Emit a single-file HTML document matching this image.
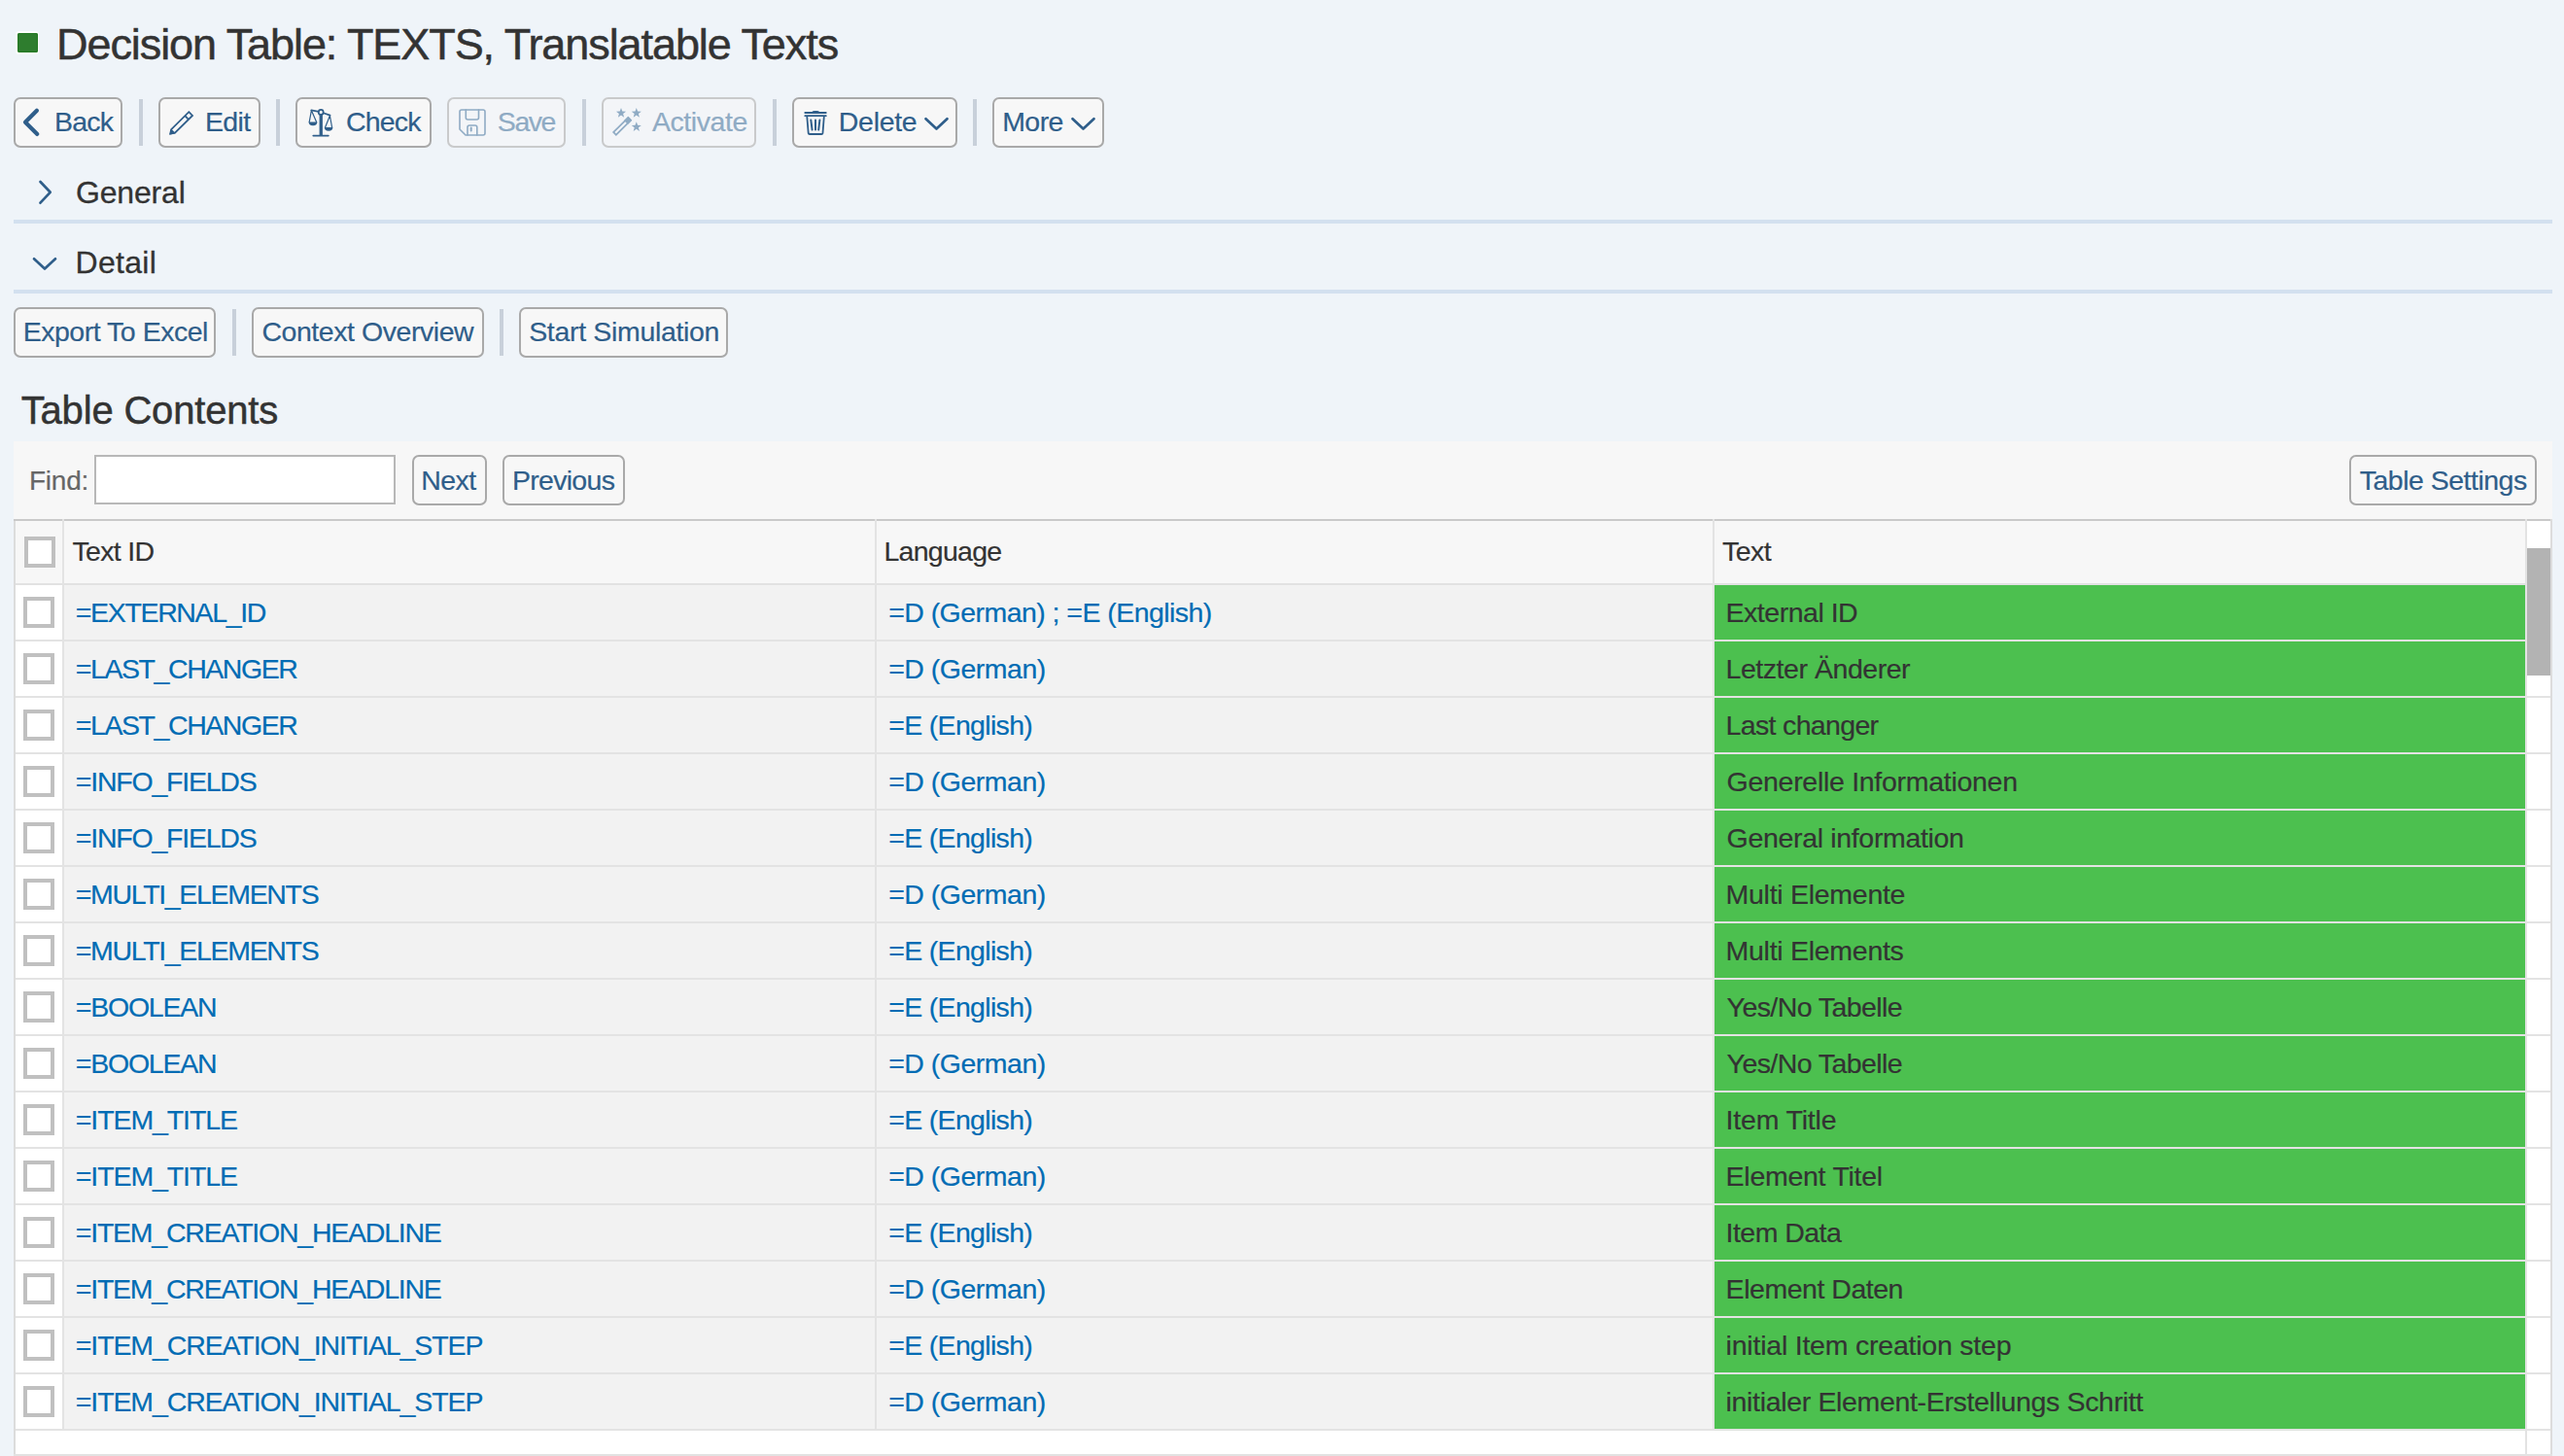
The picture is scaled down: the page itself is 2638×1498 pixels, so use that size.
<!DOCTYPE html>
<html><head><meta charset="utf-8"><title>Decision Table: TEXTS, Translatable Texts</title>
<style>
html,body{margin:0;padding:0}
body{width:2638px;height:1498px;overflow:hidden;background:#eff4f9;position:relative;font-family:"Liberation Sans",sans-serif}
.t{position:absolute;white-space:pre}
.btn{position:absolute;box-sizing:border-box;border:2px solid #a9a9a9;border-radius:7px;background:#f7f7f7}
.btn.dis{border-color:#c9cacb;background:#f3f5f8}
.sep{position:absolute;width:4px;height:48px;background:#c8d0da}
.cb{position:absolute;box-sizing:border-box;width:32px;height:32px;border:4px solid #c0c0c0;background:#fff}
</style></head><body>
<div style='position:absolute;left:16px;top:32px;width:24px;height:24px;background:#fff;border-radius:4px'></div><div style='position:absolute;left:17.5px;top:34px;width:21px;height:20px;background:#2e7d2e;border-radius:2px;box-shadow:inset 0 0 0 1px #237823'></div><div class=btn style='left:14px;top:100px;width:112px;height:52px'></div><div class=btn style='left:163px;top:100px;width:105px;height:52px'></div><div class=btn style='left:304px;top:100px;width:140px;height:52px'></div><div class='btn dis' style='left:460px;top:100px;width:122px;height:52px'></div><div class='btn dis' style='left:619px;top:100px;width:159px;height:52px'></div><div class=btn style='left:815px;top:100px;width:170px;height:52px'></div><div class=btn style='left:1021px;top:100px;width:115px;height:52px'></div><div class=sep style='left:143px;top:102px'></div><div class=sep style='left:284px;top:102px'></div><div class=sep style='left:599px;top:102px'></div><div class=sep style='left:795px;top:102px'></div><div class=sep style='left:1001px;top:102px'></div><div style='position:absolute;left:14px;top:226px;width:2612px;height:4px;background:#d3e0ef'></div><div style='position:absolute;left:14px;top:298px;width:2612px;height:4px;background:#d3e0ef'></div><div class=btn style='left:14px;top:316px;width:208px;height:52px'></div><div class=btn style='left:259px;top:316px;width:239px;height:52px'></div><div class=btn style='left:534px;top:316px;width:215px;height:52px'></div><div class=sep style='left:239px;top:318px'></div><div class=sep style='left:514px;top:318px'></div><div style='position:absolute;left:14px;top:454px;width:2612px;height:1044px;background:#f7f7f7'></div><div style='position:absolute;left:97px;top:468px;width:310px;height:51px;box-sizing:border-box;border:2px solid #b8b8b8;background:#fff'></div><div class=btn style='left:424px;top:468px;width:77px;height:52px'></div><div class=btn style='left:517px;top:468px;width:126px;height:52px'></div><div class=btn style='left:2417px;top:468px;width:193px;height:52px'></div><div style='position:absolute;left:14px;top:534px;width:2612px;height:2px;background:#c9c9c9'></div><div style='position:absolute;left:14px;top:536px;width:2px;height:962px;background:#dcdcdc'></div><div style='position:absolute;left:2624px;top:534px;width:2px;height:964px;background:#dcdcdc'></div><div style='position:absolute;left:16px;top:536px;width:2582px;height:64px;background:#f7f7f7'></div><div style='position:absolute;left:2600px;top:536px;width:24px;height:936px;background:#fff'></div><div style='position:absolute;left:16px;top:600px;width:2582px;height:2px;background:#e2e2e2'></div><div style='position:absolute;left:16px;top:602px;width:48px;height:56px;background:#fff'></div><div style='position:absolute;left:66px;top:602px;width:1696px;height:56px;background:#f2f2f2'></div><div style='position:absolute;left:1764px;top:602px;width:834px;height:56px;background:#4cc04f'></div><div style='position:absolute;left:16px;top:658px;width:2608px;height:2px;background:#e3e3e3'></div><div class=cb style='left:24px;top:614px'></div><div style='position:absolute;left:16px;top:660px;width:48px;height:56px;background:#fff'></div><div style='position:absolute;left:66px;top:660px;width:1696px;height:56px;background:#f2f2f2'></div><div style='position:absolute;left:1764px;top:660px;width:834px;height:56px;background:#4cc04f'></div><div style='position:absolute;left:16px;top:716px;width:2608px;height:2px;background:#e3e3e3'></div><div class=cb style='left:24px;top:672px'></div><div style='position:absolute;left:16px;top:718px;width:48px;height:56px;background:#fff'></div><div style='position:absolute;left:66px;top:718px;width:1696px;height:56px;background:#f2f2f2'></div><div style='position:absolute;left:1764px;top:718px;width:834px;height:56px;background:#4cc04f'></div><div style='position:absolute;left:16px;top:774px;width:2608px;height:2px;background:#e3e3e3'></div><div class=cb style='left:24px;top:730px'></div><div style='position:absolute;left:16px;top:776px;width:48px;height:56px;background:#fff'></div><div style='position:absolute;left:66px;top:776px;width:1696px;height:56px;background:#f2f2f2'></div><div style='position:absolute;left:1764px;top:776px;width:834px;height:56px;background:#4cc04f'></div><div style='position:absolute;left:16px;top:832px;width:2608px;height:2px;background:#e3e3e3'></div><div class=cb style='left:24px;top:788px'></div><div style='position:absolute;left:16px;top:834px;width:48px;height:56px;background:#fff'></div><div style='position:absolute;left:66px;top:834px;width:1696px;height:56px;background:#f2f2f2'></div><div style='position:absolute;left:1764px;top:834px;width:834px;height:56px;background:#4cc04f'></div><div style='position:absolute;left:16px;top:890px;width:2608px;height:2px;background:#e3e3e3'></div><div class=cb style='left:24px;top:846px'></div><div style='position:absolute;left:16px;top:892px;width:48px;height:56px;background:#fff'></div><div style='position:absolute;left:66px;top:892px;width:1696px;height:56px;background:#f2f2f2'></div><div style='position:absolute;left:1764px;top:892px;width:834px;height:56px;background:#4cc04f'></div><div style='position:absolute;left:16px;top:948px;width:2608px;height:2px;background:#e3e3e3'></div><div class=cb style='left:24px;top:904px'></div><div style='position:absolute;left:16px;top:950px;width:48px;height:56px;background:#fff'></div><div style='position:absolute;left:66px;top:950px;width:1696px;height:56px;background:#f2f2f2'></div><div style='position:absolute;left:1764px;top:950px;width:834px;height:56px;background:#4cc04f'></div><div style='position:absolute;left:16px;top:1006px;width:2608px;height:2px;background:#e3e3e3'></div><div class=cb style='left:24px;top:962px'></div><div style='position:absolute;left:16px;top:1008px;width:48px;height:56px;background:#fff'></div><div style='position:absolute;left:66px;top:1008px;width:1696px;height:56px;background:#f2f2f2'></div><div style='position:absolute;left:1764px;top:1008px;width:834px;height:56px;background:#4cc04f'></div><div style='position:absolute;left:16px;top:1064px;width:2608px;height:2px;background:#e3e3e3'></div><div class=cb style='left:24px;top:1020px'></div><div style='position:absolute;left:16px;top:1066px;width:48px;height:56px;background:#fff'></div><div style='position:absolute;left:66px;top:1066px;width:1696px;height:56px;background:#f2f2f2'></div><div style='position:absolute;left:1764px;top:1066px;width:834px;height:56px;background:#4cc04f'></div><div style='position:absolute;left:16px;top:1122px;width:2608px;height:2px;background:#e3e3e3'></div><div class=cb style='left:24px;top:1078px'></div><div style='position:absolute;left:16px;top:1124px;width:48px;height:56px;background:#fff'></div><div style='position:absolute;left:66px;top:1124px;width:1696px;height:56px;background:#f2f2f2'></div><div style='position:absolute;left:1764px;top:1124px;width:834px;height:56px;background:#4cc04f'></div><div style='position:absolute;left:16px;top:1180px;width:2608px;height:2px;background:#e3e3e3'></div><div class=cb style='left:24px;top:1136px'></div><div style='position:absolute;left:16px;top:1182px;width:48px;height:56px;background:#fff'></div><div style='position:absolute;left:66px;top:1182px;width:1696px;height:56px;background:#f2f2f2'></div><div style='position:absolute;left:1764px;top:1182px;width:834px;height:56px;background:#4cc04f'></div><div style='position:absolute;left:16px;top:1238px;width:2608px;height:2px;background:#e3e3e3'></div><div class=cb style='left:24px;top:1194px'></div><div style='position:absolute;left:16px;top:1240px;width:48px;height:56px;background:#fff'></div><div style='position:absolute;left:66px;top:1240px;width:1696px;height:56px;background:#f2f2f2'></div><div style='position:absolute;left:1764px;top:1240px;width:834px;height:56px;background:#4cc04f'></div><div style='position:absolute;left:16px;top:1296px;width:2608px;height:2px;background:#e3e3e3'></div><div class=cb style='left:24px;top:1252px'></div><div style='position:absolute;left:16px;top:1298px;width:48px;height:56px;background:#fff'></div><div style='position:absolute;left:66px;top:1298px;width:1696px;height:56px;background:#f2f2f2'></div><div style='position:absolute;left:1764px;top:1298px;width:834px;height:56px;background:#4cc04f'></div><div style='position:absolute;left:16px;top:1354px;width:2608px;height:2px;background:#e3e3e3'></div><div class=cb style='left:24px;top:1310px'></div><div style='position:absolute;left:16px;top:1356px;width:48px;height:56px;background:#fff'></div><div style='position:absolute;left:66px;top:1356px;width:1696px;height:56px;background:#f2f2f2'></div><div style='position:absolute;left:1764px;top:1356px;width:834px;height:56px;background:#4cc04f'></div><div style='position:absolute;left:16px;top:1412px;width:2608px;height:2px;background:#e3e3e3'></div><div class=cb style='left:24px;top:1368px'></div><div style='position:absolute;left:16px;top:1414px;width:48px;height:56px;background:#fff'></div><div style='position:absolute;left:66px;top:1414px;width:1696px;height:56px;background:#f2f2f2'></div><div style='position:absolute;left:1764px;top:1414px;width:834px;height:56px;background:#4cc04f'></div><div style='position:absolute;left:16px;top:1470px;width:2608px;height:2px;background:#e3e3e3'></div><div class=cb style='left:24px;top:1426px'></div><div style='position:absolute;left:16px;top:1472px;width:2608px;height:24px;background:#fff'></div><div style='position:absolute;left:14px;top:1496px;width:2612px;height:2px;background:#e2e2e2'></div><div style='position:absolute;left:64px;top:534px;width:2px;height:938px;background:#e3e3e3'></div><div style='position:absolute;left:900px;top:534px;width:2px;height:938px;background:#e3e3e3'></div><div style='position:absolute;left:1762px;top:534px;width:2px;height:938px;background:#e3e3e3'></div><div style='position:absolute;left:2598px;top:534px;width:2px;height:964px;background:#e3e3e3'></div><div class=cb style='left:25px;top:552px'></div><div style='position:absolute;left:2600px;top:564px;width:24px;height:131px;background:#b3b3b3'></div>

<svg width="2638" height="1498" style="position:absolute;left:0;top:0" fill="none" stroke-linecap="round" stroke-linejoin="round">
 <g stroke="#2f5e8a">
  <polyline points="37.9,113.8 26,125.8 38.3,137.9" stroke-width="4.2"/>
  <g stroke-width="1.8" stroke-linecap="butt" stroke-linejoin="miter">
   <path d="M194.3,115.2 L198,118.9 L180,136.7 L175.2,137.6 L176.2,133.1 Z"/>
   <path d="M190.3,119.2 L194,122.9"/>
  </g>
  <path d="M175.2,137.6 L176.2,133.1 L179.8,136.6 Z" fill="#2f5e8a" stroke-width="1"/>
  <g stroke-width="1.7">
   <circle cx="330.2" cy="115.4" r="2.5"/>
   <path d="M320.3,113.3 L327.8,114.8 M332.6,116.2 L339.6,118.6"/>
  </g>
  <g stroke-width="1.2">
   <path d="M320.4,113.6 L318.2,125.6 M320.4,113.6 L325.6,125.6 M339.4,119 L334.6,131 M339.4,119 L341.6,131"/>
  </g>
  <path d="M322.3,139.6 L337.8,139.6" stroke-width="1.8"/>
  <rect x="328.6" y="117.6" width="3.3" height="22" fill="#2f5e8a" stroke="none"/>
  <path d="M317.6,125.6 h8.8 a4.4,3.6 0 0 1 -8.8,0 Z" fill="#2f5e8a" stroke="none"/>
  <path d="M333.8,131 h8.6 a4.3,3.7 0 0 1 -8.6,0 Z" fill="#2f5e8a" stroke="none"/>
  <g stroke-width="1.8">
   <path d="M828.3,116 H849.8 M828.3,119.2 H849.8"/>
   <path d="M830.3,120 L831.7,137 Q831.9,138 832.9,138 H845.3 Q846.3,138 846.5,137 L847.8,120"/>
   <path d="M834.3,123.4 L835.6,133.6 M839,123.4 V133.6 M843.4,123.4 L842.2,133.6" stroke-width="2"/>
  </g>
  <path d="M835.3,115.2 Q836,113.9 838,113.9 H840.6 Q842.5,113.9 843.2,115.2 Z" fill="#2f5e8a" stroke="none"/>
  <polyline points="952.5,122.2 963.5,132.5 974.5,122.2" stroke-width="2.7"/>
  <polyline points="1103.5,122.2 1114.5,132.5 1125.5,122.2" stroke-width="2.7"/>
  <polyline points="41.5,187 51.7,197.8 41.5,208.7" stroke-width="2.7"/>
  <polyline points="35,266.3 46,276.5 57,266.3" stroke-width="2.7"/>
 </g>
 <g stroke="#8fabc4" stroke-width="1.6">
  <path d="M473,115 a2,2 0 0 1 2,-2 H497 a2,2 0 0 1 2,2 V137 a2,2 0 0 1 -2,2 H479 L473,133 Z"/>
  <path d="M479.3,113 V121 a2,2 0 0 0 2,2 H490.5 a2,2 0 0 0 2,-2 V113"/>
  <path d="M481,139 V131 a2,2 0 0 1 2,-2 H488.8 a2,2 0 0 1 2,2 V139"/>
  <path d="M484.7,131.5 V134.5" stroke-width="2"/>
  <g transform="translate(640.1,129.9) rotate(-45)">
   <rect x="-10.7" y="-1.9" width="21.4" height="3.8" stroke-width="1.7" stroke-linejoin="miter"/>
   <rect x="5.5" y="-2.75" width="6" height="5.5" fill="#8fabc4" stroke="none"/>
  </g>
 </g>
 <g fill="#8fabc4">
  <polygon points='639.00,111.10 640.29,114.62 644.04,114.76 641.09,117.08 642.12,120.69 639.00,118.60 635.88,120.69 636.91,117.08 633.96,114.76 637.71,114.62'/><polygon points='654.80,111.10 656.09,114.62 659.84,114.76 656.89,117.08 657.92,120.69 654.80,118.60 651.68,120.69 652.71,117.08 649.76,114.76 653.51,114.62'/><polygon points='654.80,125.30 656.09,128.82 659.84,128.96 656.89,131.28 657.92,134.89 654.80,132.80 651.68,134.89 652.71,131.28 649.76,128.96 653.51,128.82'/>
 </g>
</svg>

<div class=t style='left:58.0px;top:23.0px;font-size:45px;line-height:45px;letter-spacing:-1.07px;color:#333333;-webkit-text-stroke-width:0.5px'>Decision Table: TEXTS, Translatable Texts</div><div class=t style='left:56.0px;top:111.0px;font-size:28.5px;line-height:28.5px;letter-spacing:-0.77px;color:#2f5e8a;-webkit-text-stroke-width:0.2px'>Back</div><div class=t style='left:210.9px;top:111.0px;font-size:28.5px;line-height:28.5px;letter-spacing:-0.63px;color:#2f5e8a;-webkit-text-stroke-width:0.2px'>Edit</div><div class=t style='left:356.0px;top:111.0px;font-size:28.5px;line-height:28.5px;letter-spacing:-0.83px;color:#2f5e8a;-webkit-text-stroke-width:0.2px'>Check</div><div class=t style='left:511.8px;top:111.0px;font-size:28.5px;line-height:28.5px;letter-spacing:-1.43px;color:#8fabc4;-webkit-text-stroke-width:0.2px'>Save</div><div class=t style='left:670.9px;top:111.0px;font-size:28.5px;line-height:28.5px;letter-spacing:-0.41px;color:#8fabc4;-webkit-text-stroke-width:0.2px'>Activate</div><div class=t style='left:862.8px;top:111.0px;font-size:28.5px;line-height:28.5px;letter-spacing:-0.30px;color:#2f5e8a;-webkit-text-stroke-width:0.2px'>Delete</div><div class=t style='left:1031.2px;top:111.0px;font-size:28.5px;line-height:28.5px;letter-spacing:-0.57px;color:#2f5e8a;-webkit-text-stroke-width:0.2px'>More</div><div class=t style='left:78.0px;top:182.0px;font-size:32px;line-height:32px;letter-spacing:-0.17px;color:#333333;-webkit-text-stroke-width:0.3px'>General</div><div class=t style='left:77.6px;top:254.0px;font-size:32px;line-height:32px;letter-spacing:0.28px;color:#333333;-webkit-text-stroke-width:0.3px'>Detail</div><div class=t style='left:23.7px;top:327.0px;font-size:28.5px;line-height:28.5px;letter-spacing:-0.48px;color:#2f5e8a;-webkit-text-stroke-width:0.2px'>Export To Excel</div><div class=t style='left:269.4px;top:327.0px;font-size:28.5px;line-height:28.5px;letter-spacing:-0.44px;color:#2f5e8a;-webkit-text-stroke-width:0.2px'>Context Overview</div><div class=t style='left:544.2px;top:327.0px;font-size:28.5px;line-height:28.5px;letter-spacing:-0.33px;color:#2f5e8a;-webkit-text-stroke-width:0.2px'>Start Simulation</div><div class=t style='left:21.7px;top:402.0px;font-size:40px;line-height:40px;letter-spacing:-0.17px;color:#333333;-webkit-text-stroke-width:0.5px'>Table Contents</div><div class=t style='left:30.0px;top:481.0px;font-size:28px;line-height:28px;letter-spacing:-0.25px;color:#666666;-webkit-text-stroke-width:0.2px'>Find:</div><div class=t style='left:433.3px;top:479.5px;font-size:28.5px;line-height:28.5px;letter-spacing:-0.60px;color:#2f5e8a;-webkit-text-stroke-width:0.2px'>Next</div><div class=t style='left:526.9px;top:479.5px;font-size:28.5px;line-height:28.5px;letter-spacing:-0.69px;color:#2f5e8a;-webkit-text-stroke-width:0.2px'>Previous</div><div class=t style='left:2427.7px;top:479.5px;font-size:28.5px;line-height:28.5px;letter-spacing:-0.50px;color:#2f5e8a;-webkit-text-stroke-width:0.2px'>Table Settings</div><div class=t style='left:74.6px;top:553.0px;font-size:28.5px;line-height:28.5px;letter-spacing:-0.72px;color:#333333;-webkit-text-stroke-width:0.2px'>Text ID</div><div class=t style='left:909.5px;top:553.0px;font-size:28.5px;line-height:28.5px;letter-spacing:-0.74px;color:#333333;-webkit-text-stroke-width:0.2px'>Language</div><div class=t style='left:1772.1px;top:553.0px;font-size:28.5px;line-height:28.5px;letter-spacing:-0.60px;color:#333333;-webkit-text-stroke-width:0.2px'>Text</div><div class=t style='left:77.8px;top:616.0px;font-size:28.5px;line-height:28.5px;letter-spacing:-1.35px;color:#006cb4;-webkit-text-stroke-width:0.2px'>=EXTERNAL_ID</div><div class=t style='left:914.2px;top:616.0px;font-size:28.5px;line-height:28.5px;letter-spacing:-0.55px;color:#006cb4;-webkit-text-stroke-width:0.2px'>=D (German) ; =E (English)</div><div class=t style='left:1775.6px;top:616.0px;font-size:28.5px;line-height:28.5px;letter-spacing:-0.49px;color:#333333;-webkit-text-stroke-width:0.2px'>External ID</div><div class=t style='left:77.8px;top:674.0px;font-size:28.5px;line-height:28.5px;letter-spacing:-1.43px;color:#006cb4;-webkit-text-stroke-width:0.2px'>=LAST_CHANGER</div><div class=t style='left:914.2px;top:674.0px;font-size:28.5px;line-height:28.5px;letter-spacing:-0.50px;color:#006cb4;-webkit-text-stroke-width:0.2px'>=D (German)</div><div class=t style='left:1775.6px;top:674.0px;font-size:28.5px;line-height:28.5px;letter-spacing:-0.46px;color:#333333;-webkit-text-stroke-width:0.2px'>Letzter Änderer</div><div class=t style='left:77.8px;top:732.0px;font-size:28.5px;line-height:28.5px;letter-spacing:-1.43px;color:#006cb4;-webkit-text-stroke-width:0.2px'>=LAST_CHANGER</div><div class=t style='left:914.2px;top:732.0px;font-size:28.5px;line-height:28.5px;letter-spacing:-0.67px;color:#006cb4;-webkit-text-stroke-width:0.2px'>=E (English)</div><div class=t style='left:1775.6px;top:732.0px;font-size:28.5px;line-height:28.5px;letter-spacing:-0.66px;color:#333333;-webkit-text-stroke-width:0.2px'>Last changer</div><div class=t style='left:77.8px;top:790.0px;font-size:28.5px;line-height:28.5px;letter-spacing:-1.22px;color:#006cb4;-webkit-text-stroke-width:0.2px'>=INFO_FIELDS</div><div class=t style='left:914.2px;top:790.0px;font-size:28.5px;line-height:28.5px;letter-spacing:-0.50px;color:#006cb4;-webkit-text-stroke-width:0.2px'>=D (German)</div><div class=t style='left:1776.6px;top:790.0px;font-size:28.5px;line-height:28.5px;letter-spacing:-0.29px;color:#333333;-webkit-text-stroke-width:0.2px'>Generelle Informationen</div><div class=t style='left:77.8px;top:848.0px;font-size:28.5px;line-height:28.5px;letter-spacing:-1.22px;color:#006cb4;-webkit-text-stroke-width:0.2px'>=INFO_FIELDS</div><div class=t style='left:914.2px;top:848.0px;font-size:28.5px;line-height:28.5px;letter-spacing:-0.67px;color:#006cb4;-webkit-text-stroke-width:0.2px'>=E (English)</div><div class=t style='left:1776.6px;top:848.0px;font-size:28.5px;line-height:28.5px;letter-spacing:-0.33px;color:#333333;-webkit-text-stroke-width:0.2px'>General information</div><div class=t style='left:77.8px;top:906.0px;font-size:28.5px;line-height:28.5px;letter-spacing:-1.33px;color:#006cb4;-webkit-text-stroke-width:0.2px'>=MULTI_ELEMENTS</div><div class=t style='left:914.2px;top:906.0px;font-size:28.5px;line-height:28.5px;letter-spacing:-0.50px;color:#006cb4;-webkit-text-stroke-width:0.2px'>=D (German)</div><div class=t style='left:1775.6px;top:906.0px;font-size:28.5px;line-height:28.5px;letter-spacing:-0.28px;color:#333333;-webkit-text-stroke-width:0.2px'>Multi Elemente</div><div class=t style='left:77.8px;top:964.0px;font-size:28.5px;line-height:28.5px;letter-spacing:-1.33px;color:#006cb4;-webkit-text-stroke-width:0.2px'>=MULTI_ELEMENTS</div><div class=t style='left:914.2px;top:964.0px;font-size:28.5px;line-height:28.5px;letter-spacing:-0.67px;color:#006cb4;-webkit-text-stroke-width:0.2px'>=E (English)</div><div class=t style='left:1775.6px;top:964.0px;font-size:28.5px;line-height:28.5px;letter-spacing:-0.28px;color:#333333;-webkit-text-stroke-width:0.2px'>Multi Elements</div><div class=t style='left:77.8px;top:1022.0px;font-size:28.5px;line-height:28.5px;letter-spacing:-1.23px;color:#006cb4;-webkit-text-stroke-width:0.2px'>=BOOLEAN</div><div class=t style='left:914.2px;top:1022.0px;font-size:28.5px;line-height:28.5px;letter-spacing:-0.67px;color:#006cb4;-webkit-text-stroke-width:0.2px'>=E (English)</div><div class=t style='left:1776.6px;top:1022.0px;font-size:28.5px;line-height:28.5px;letter-spacing:-0.58px;color:#333333;-webkit-text-stroke-width:0.2px'>Yes/No Tabelle</div><div class=t style='left:77.8px;top:1080.0px;font-size:28.5px;line-height:28.5px;letter-spacing:-1.23px;color:#006cb4;-webkit-text-stroke-width:0.2px'>=BOOLEAN</div><div class=t style='left:914.2px;top:1080.0px;font-size:28.5px;line-height:28.5px;letter-spacing:-0.50px;color:#006cb4;-webkit-text-stroke-width:0.2px'>=D (German)</div><div class=t style='left:1776.6px;top:1080.0px;font-size:28.5px;line-height:28.5px;letter-spacing:-0.58px;color:#333333;-webkit-text-stroke-width:0.2px'>Yes/No Tabelle</div><div class=t style='left:77.8px;top:1138.0px;font-size:28.5px;line-height:28.5px;letter-spacing:-1.10px;color:#006cb4;-webkit-text-stroke-width:0.2px'>=ITEM_TITLE</div><div class=t style='left:914.2px;top:1138.0px;font-size:28.5px;line-height:28.5px;letter-spacing:-0.67px;color:#006cb4;-webkit-text-stroke-width:0.2px'>=E (English)</div><div class=t style='left:1775.6px;top:1138.0px;font-size:28.5px;line-height:28.5px;letter-spacing:-0.18px;color:#333333;-webkit-text-stroke-width:0.2px'>Item Title</div><div class=t style='left:77.8px;top:1196.0px;font-size:28.5px;line-height:28.5px;letter-spacing:-1.10px;color:#006cb4;-webkit-text-stroke-width:0.2px'>=ITEM_TITLE</div><div class=t style='left:914.2px;top:1196.0px;font-size:28.5px;line-height:28.5px;letter-spacing:-0.50px;color:#006cb4;-webkit-text-stroke-width:0.2px'>=D (German)</div><div class=t style='left:1775.6px;top:1196.0px;font-size:28.5px;line-height:28.5px;letter-spacing:-0.27px;color:#333333;-webkit-text-stroke-width:0.2px'>Element Titel</div><div class=t style='left:77.8px;top:1254.0px;font-size:28.5px;line-height:28.5px;letter-spacing:-1.23px;color:#006cb4;-webkit-text-stroke-width:0.2px'>=ITEM_CREATION_HEADLINE</div><div class=t style='left:914.2px;top:1254.0px;font-size:28.5px;line-height:28.5px;letter-spacing:-0.67px;color:#006cb4;-webkit-text-stroke-width:0.2px'>=E (English)</div><div class=t style='left:1775.6px;top:1254.0px;font-size:28.5px;line-height:28.5px;letter-spacing:-0.55px;color:#333333;-webkit-text-stroke-width:0.2px'>Item Data</div><div class=t style='left:77.8px;top:1312.0px;font-size:28.5px;line-height:28.5px;letter-spacing:-1.23px;color:#006cb4;-webkit-text-stroke-width:0.2px'>=ITEM_CREATION_HEADLINE</div><div class=t style='left:914.2px;top:1312.0px;font-size:28.5px;line-height:28.5px;letter-spacing:-0.50px;color:#006cb4;-webkit-text-stroke-width:0.2px'>=D (German)</div><div class=t style='left:1775.6px;top:1312.0px;font-size:28.5px;line-height:28.5px;letter-spacing:-0.47px;color:#333333;-webkit-text-stroke-width:0.2px'>Element Daten</div><div class=t style='left:77.8px;top:1370.0px;font-size:28.5px;line-height:28.5px;letter-spacing:-1.11px;color:#006cb4;-webkit-text-stroke-width:0.2px'>=ITEM_CREATION_INITIAL_STEP</div><div class=t style='left:914.2px;top:1370.0px;font-size:28.5px;line-height:28.5px;letter-spacing:-0.67px;color:#006cb4;-webkit-text-stroke-width:0.2px'>=E (English)</div><div class=t style='left:1775.6px;top:1370.0px;font-size:28.5px;line-height:28.5px;letter-spacing:-0.22px;color:#333333;-webkit-text-stroke-width:0.2px'>initial Item creation step</div><div class=t style='left:77.8px;top:1428.0px;font-size:28.5px;line-height:28.5px;letter-spacing:-1.11px;color:#006cb4;-webkit-text-stroke-width:0.2px'>=ITEM_CREATION_INITIAL_STEP</div><div class=t style='left:914.2px;top:1428.0px;font-size:28.5px;line-height:28.5px;letter-spacing:-0.50px;color:#006cb4;-webkit-text-stroke-width:0.2px'>=D (German)</div><div class=t style='left:1775.6px;top:1428.0px;font-size:28.5px;line-height:28.5px;letter-spacing:-0.34px;color:#333333;-webkit-text-stroke-width:0.2px'>initialer Element-Erstellungs Schritt</div>
</body></html>
